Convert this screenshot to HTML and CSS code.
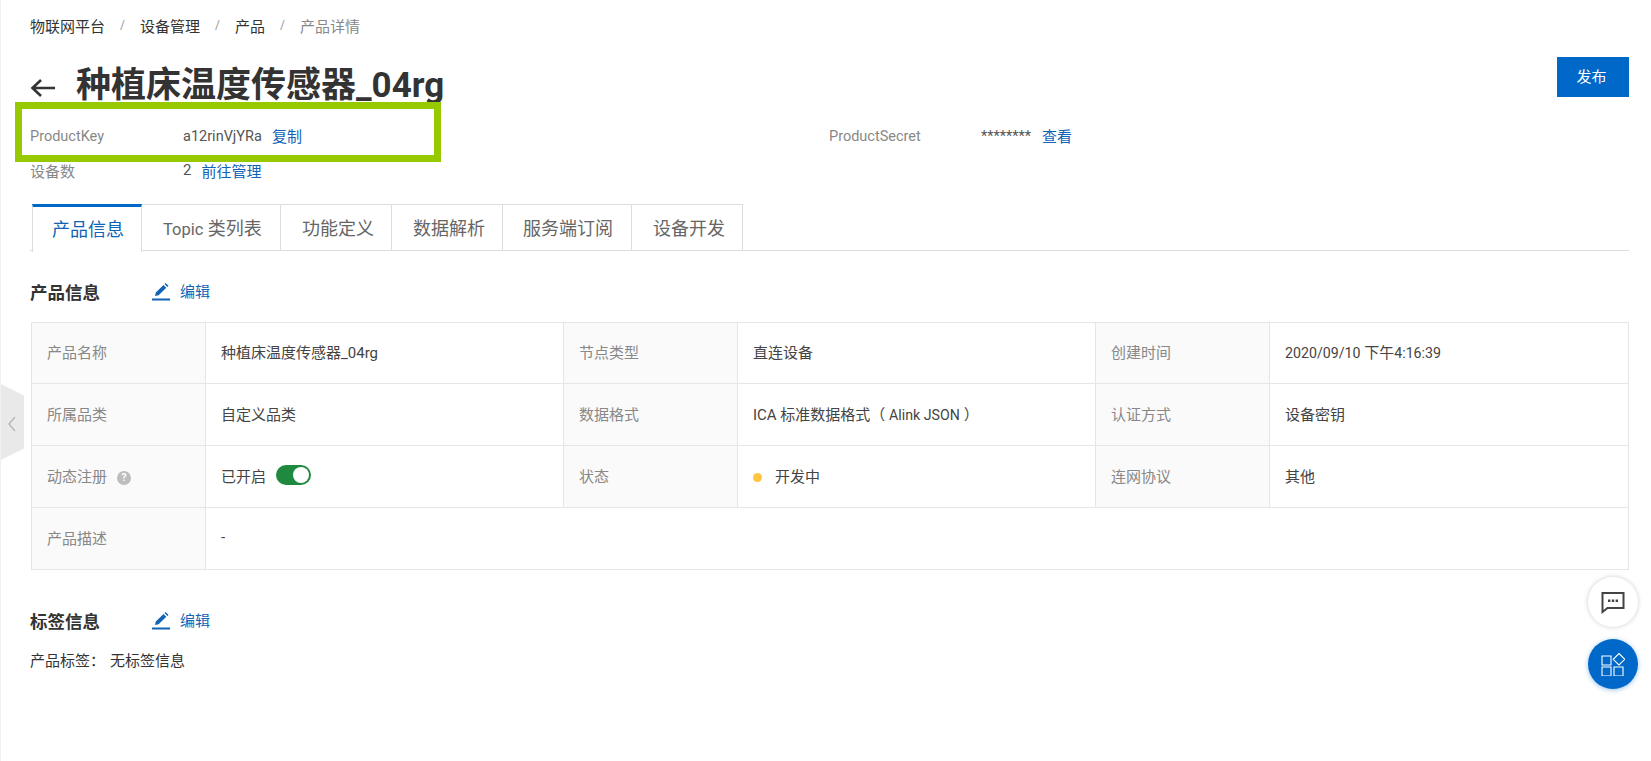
FILE: index.html
```html
<!DOCTYPE html>
<html lang="zh-CN">
<head>
<meta charset="utf-8">
<title>产品详情</title>
<link rel="stylesheet" href="styles.css">
</head>
<body>
<main class="page">
  <nav class="crumbs">
    <span>物联网平台</span><i>/</i><span>设备管理</span><i>/</i><span>产品</span><i>/</i><span class="cur">产品详情</span>
  </nav>
  <header class="head">
    <div class="title-row">
      <svg class="back" viewBox="0 0 26 20" width="26" height="20"><path d="M25 10H2M11 2 2.500 10 11 18" fill="none" stroke="#333" stroke-width="2.600"/></svg>
      <h1>种植床温度传感器_04rg</h1>
    </div>
    <button class="publish"><span>发布</span></button>
  </header>
  <section class="meta">
    <div class="meta-row">
      <div class="meta-cell cell-a"><span class="k sm">ProductKey</span><span class="v sm">a12rinVjYRa</span><a class="copy">复制</a></div>
      <div class="meta-cell"><span class="k k-b sm">ProductSecret</span><span class="v v-secret sm">********</span><a class="copy">查看</a></div>
    </div>
    <div class="meta-row">
      <div class="meta-cell cell-a"><span class="k">设备数</span><span class="v">2</span><a>前往管理</a></div>
    </div>
  </section>
  <div class="tabs">
    <div class="tab active">产品信息</div>
    <div class="tab"><span class="topic">Topic</span> 类列表</div>
    <div class="tab">功能定义</div>
    <div class="tab">数据解析</div>
    <div class="tab">服务端订阅</div>
    <div class="tab">设备开发</div>
  </div>
  <div class="sec-head">
    <h2>产品信息</h2>
    <a class="edit"><svg viewBox="0 0 18 18" width="18" height="18"><path d="M0 15.500h18V17.500H0zM3 13l.8-3.400L11.500 2l2.800 2.800-7.700 7.500zM12.500 1l1-1 3 2.800-1 1.200z" fill="#1063b5"/></svg><span>编辑</span></a>
  </div>
  <table class="info">
    <tr class="row-first">
      <th class="c1">产品名称</th><td class="c2">种植床温度传感器_04rg</td>
      <th class="c3">节点类型</th><td class="c4">直连设备</td>
      <th class="c5">创建时间</th><td><span class="sm">2020/09/10</span> 下午<span class="sm">4:16:39</span></td>
    </tr>
    <tr>
      <th>所属品类</th><td>自定义品类</td>
      <th>数据格式</th><td>ICA 标准数据格式（ <span class="sm">Alink JSON</span> ）</td>
      <th>认证方式</th><td>设备密钥</td>
    </tr>
    <tr>
      <th>动态注册<span class="help">?</span></th><td><span class="on-row">已开启<span class="switch"></span></span></td>
      <th>状态</th><td><span class="dot"></span>开发中</td>
      <th>连网协议</th><td>其他</td>
    </tr>
    <tr>
      <th>产品描述</th><td colspan="5">-</td>
    </tr>
  </table>
  <div class="sec-head sec-tag">
    <h2>标签信息</h2>
    <a class="edit"><svg viewBox="0 0 18 18" width="18" height="18"><path d="M0 15.500h18V17.500H0zM3 13l.8-3.400L11.500 2l2.800 2.800-7.700 7.500zM12.500 1l1-1 3 2.800-1 1.200z" fill="#1063b5"/></svg><span>编辑</span></a>
  </div>
  <p class="tags"><span>产品标签：</span>无标签信息</p>
</main>

<div class="mark"></div>
<div class="handle"><svg viewBox="0 0 10 16" width="10" height="16"><path d="M8 1 2 8l6 7" fill="none" stroke="#b5b5b5" stroke-width="1.300"/></svg></div>
<div class="fab fab-chat"><svg viewBox="0 0 24 24" width="24" height="24"><path d="M1.500 3h21v15H6.500L1.500 22z" fill="none" stroke="#444" stroke-width="2"/><path d="M7 9.500h2.400v2.400H7zM10.800 9.500h2.400v2.400h-2.400zM14.600 9.500H17v2.400h-2.400z" fill="#444"/></svg></div>
<div class="fab fab-app"><svg viewBox="0 0 24 24" width="24" height="24"><g fill="none" stroke="#fff" stroke-width="1.100"><path d="M1 4h9v9H1zM1 15h9v9H1zM13 15h9v9h-9zM18 1.500l5.800 5.800L18 13l-5.800-5.700z"/></g></svg></div>
</body>
</html>
```
FILE: styles.css
```css
* { box-sizing: border-box; }
html, body { margin: 0; padding: 0; background: #fff; }
body {
  width: 1651px;
  height: 761px;
  overflow: hidden;
  font-family: Roboto, "Noto Sans CJK SC", sans-serif;
  font-size: 15px;
  color: #333;
  border-left: 1px solid #f0f0f0;
}
.sm { font-size: 14.500px; }
.page { padding: 0 22px 0 29px; }
.crumbs { display: flex; align-items: center; height: 20px; margin-top: 15px; color: #333; }
.crumbs i { font-style: normal; color: #999; margin: 0 15px; font-size: 12px; }
.crumbs .cur { color: #888; }
.head { display: flex; justify-content: space-between; align-items: flex-start; height: 60px; margin-top: 22px; }
.title-row { display: flex; align-items: center; height: 58px; }
.back { margin-right: 20px; margin-top: 3px; }
h1 { margin: 0; font-size: 35px; font-weight: 700; color: #333; line-height: 58px; white-space: nowrap; }
.publish {
  width: 72px; height: 40px; border: 0; background: #0068c8; color: #fff;
  font: inherit; padding: 0 3px 4px 0;
}
.meta { margin-top: 2px; }
.meta-row { display: flex; height: 34px; align-items: center; }
.meta-cell { display: flex; align-items: center; }
.cell-a { width: 799px; }
.k { width: 153px; color: #888; }
.k-b { width: 152px; }
.v { color: #555; margin-right: 10px; }
.v-secret { margin-right: 11px; }
.copy { margin-top: -2px; }
a { color: #1063b5; }
.tabs { display: flex; height: 47px; margin-top: 17px; border-bottom: 1px solid #ddd; padding-left: 2px; }
.tab {
  height: 47px; padding: 0 21px; line-height: 47px; font-size: 18px; color: #666;
  border: 1px solid #ddd; border-left: 0; white-space: nowrap; background: #fff;
}
.topic { font-size: 16.500px; }
.tab:nth-child(1) { width: 110px; padding: 0 19px; }
.tab:nth-child(2) { width: 139px; }
.tab:nth-child(3) { width: 111px; }
.tab:nth-child(4) { width: 111px; }
.tab:nth-child(5) { width: 129px; padding: 0 20px; }
.tab:nth-child(6) { width: 111px; }
.tab.active {
  color: #1063b5; border-top: 3px solid #0068c8; border-left: 1px solid #ddd;
  border-bottom: 0; height: 48px; line-height: 45px;
}
.sec-head { display: flex; align-items: center; height: 40px; margin-top: 20px; }
.sec-head h2 { margin: 0; width: 122px; font-size: 17.500px; font-weight: 700; color: #333; }
.edit { display: flex; align-items: center; gap: 10px; margin-top: -2px; }
.edit svg { display: block; margin-top: 4px; }
.info {
  width: 1598px; margin: 11px 0 0 1px; border-collapse: collapse; table-layout: fixed;
  border: 1px solid #e6e6e6;
}
.info th, .info td { height: 62px; border: 1px solid #e6e6e6; padding: 0 15px 3px; font-weight: 400; text-align: left; white-space: nowrap; }
.info .row-first th, .info .row-first td { height: 61px; }
.info th { background: #fafafa; color: #888; }
.info td { color: #444; }
.info .sm { font-size: 14.200px; }
.c1 { width: 174px; }
.c2 { width: 358px; }
.c3 { width: 174px; }
.c4 { width: 358px; }
.c5 { width: 174px; }
.help {
  display: inline-block; width: 14px; height: 14px; border-radius: 50%; background: #bdbdbd; color: #fff;
  margin-left: 10px; font-size: 10px; line-height: 14px; text-align: center; vertical-align: 1px; font-weight: 700;
}
.on-row { display: flex; align-items: center; gap: 10px; }
.switch {
  position: relative; display: inline-block; width: 35px; height: 20px; border-radius: 10px; background: #1f8a3f;
}
.switch::after {
  content: ""; position: absolute; right: 2px; top: 2px; width: 16px; height: 16px; border-radius: 50%; background: #fff;
}
.dot { display: inline-block; width: 9px; height: 9px; border-radius: 50%; background: #ffc440; margin-right: 13px; }
.sec-tag { margin-top: 30px; }
.tags { margin: 9px 0 0; color: #333; }
.tags span { margin-right: 5px; }
.mark { position: absolute; left: 15px; top: 102px; width: 426px; height: 60px; border: 7px solid #97c900; }
.handle {
  position: absolute; left: 1px; top: 384px; width: 23px; height: 76px; background: #e9e9e9;
  clip-path: polygon(0 0, 100% 15%, 100% 85%, 0 100%);
  display: flex; align-items: center; padding: 3px 0 0 6px;
}
.fab {
  position: absolute; left: 1588px; width: 50px; height: 50px; border-radius: 50%;
  display: flex; align-items: center; justify-content: center;
}
.fab-chat { top: 577px; background: #fff; box-shadow: 0 0 5px rgba(0,0,0,.2); }
.fab-app { top: 639px; background: #0068c8; box-shadow: 0 1px 5px rgba(0,104,200,.4); }
```
